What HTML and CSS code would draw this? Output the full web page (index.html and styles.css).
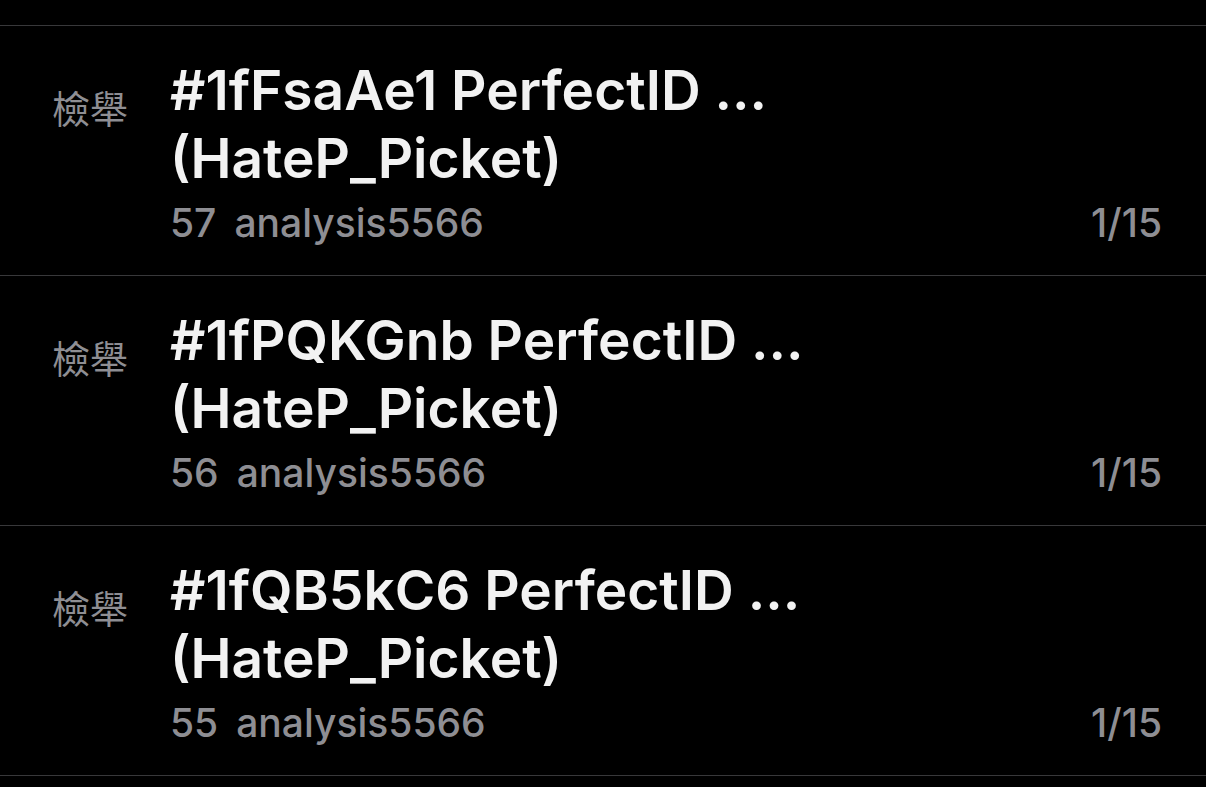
FILE: index.html
```html
<!DOCTYPE html>
<html lang="zh-Hant">
<head>
    <meta charset="UTF-8">
    <meta name="viewport" content="width=device-width, initial-scale=1.0">
    <title>看板文章</title>
    <link rel="stylesheet" href="styles.css">
</head>
<body>
    <div class="list">
        <div class="row">
            <div class="tag">檢舉</div>
            <div class="body">
                <div class="title">#1fFsaAe1 PerfectID ...<br>(HateP_Picket)</div>
                <div class="meta">
                    <span class="info"><span class="count">57</span><span class="author">analysis5566</span></span>
                    <span class="page">1/15</span>
                </div>
            </div>
        </div>
        <div class="row">
            <div class="tag">檢舉</div>
            <div class="body">
                <div class="title">#1fPQKGnb PerfectID ...<br>(HateP_Picket)</div>
                <div class="meta">
                    <span class="info"><span class="count">56</span><span class="author">analysis5566</span></span>
                    <span class="page">1/15</span>
                </div>
            </div>
        </div>
        <div class="row">
            <div class="tag">檢舉</div>
            <div class="body">
                <div class="title">#1fQB5kC6 PerfectID ...<br>(HateP_Picket)</div>
                <div class="meta">
                    <span class="info"><span class="count">55</span><span class="author">analysis5566</span></span>
                    <span class="page">1/15</span>
                </div>
            </div>
        </div>
    </div>
</body>
</html>
```

FILE: styles.css
```css
body {
    margin: 0;
    background: #000;
    font-family: Inter, "Noto Sans CJK TC", sans-serif;
    overflow: hidden;
}
.list {
    padding-top: 25px;
}
.row {
    display: flex;
    height: 249px;
    border-top: 1px solid #38383a;
    padding: 0 44px 0 52px;
}
.row:last-child {
    border-bottom: 1px solid #38383a;
}
.tag {
    width: 118px;
    flex-shrink: 0;
    margin-top: 58px;
    font-size: 38px;
    line-height: 46px;
    color: #8e8e93;
    font-family: "Noto Sans CJK TC", sans-serif;
}
.body {
    flex: 1;
    padding-top: 30px;
}
.title {
    font-size: 55px;
    line-height: 68px;
    font-weight: 600;
    color: #f2f2f2;
}
.meta {
    display: flex;
    justify-content: space-between;
    font-size: 39px;
    line-height: 62px;
    font-weight: 500;
    color: #8e8e93;
}
.count {
    margin-right: 18px;
}
```
